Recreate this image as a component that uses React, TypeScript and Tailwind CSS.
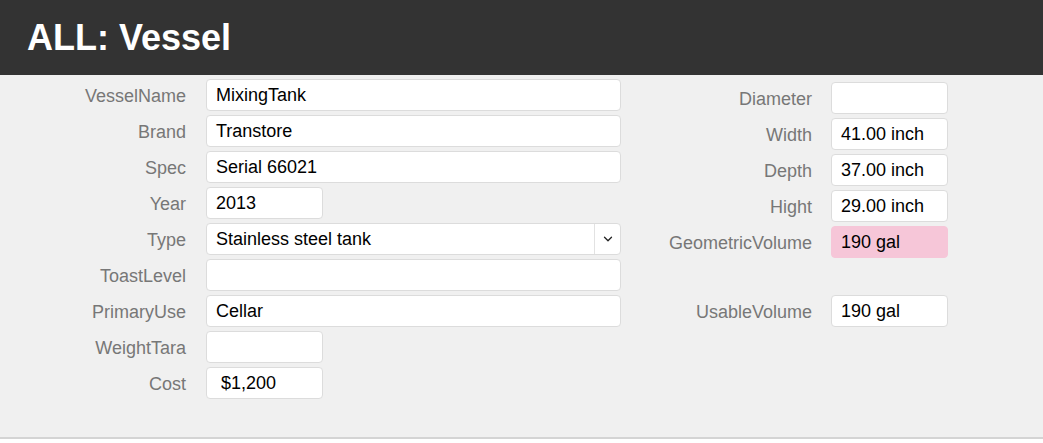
import { ChevronDown } from 'lucide-react';

type Field = { label: string; value?: string; size: 'wide' | 'small'; kind?: 'select' | 'money' };

const LEFT_FIELDS: Field[] = [
  { label: 'VesselName', value: 'MixingTank', size: 'wide' },
  { label: 'Brand', value: 'Transtore', size: 'wide' },
  { label: 'Spec', value: 'Serial 66021', size: 'wide' },
  { label: 'Year', value: '2013', size: 'small' },
  { label: 'Type', value: 'Stainless steel tank', size: 'wide', kind: 'select' },
  { label: 'ToastLevel', value: '', size: 'wide' },
  { label: 'PrimaryUse', value: 'Cellar', size: 'wide' },
  { label: 'WeightTara', value: '', size: 'small' },
  { label: 'Cost', value: '$1,200', size: 'small', kind: 'money' },
];

const DIMENSIONS = [
  { label: 'Diameter', value: '' },
  { label: 'Width', value: '41.00 inch' },
  { label: 'Depth', value: '37.00 inch' },
  { label: 'Hight', value: '29.00 inch' },
];

function Box({ value, size, kind, pink }: { value?: string; size: 'wide' | 'small'; kind?: string; pink?: boolean }) {
  return (
    <div
      className={`h-[32px] flex items-center rounded-[4px] border text-black ${
        size === 'wide' ? 'w-[415px]' : 'w-[117px]'
      } ${pink ? 'bg-[#f6c6d8] border-[#f6c6d8]' : 'bg-white border-[#dcdcdc]'}`}
    >
      <span className={`flex-1 truncate pt-[1px] ${kind === 'money' ? 'pl-[14px]' : 'pl-[9px]'}`}>{value}</span>
      {kind === 'select' && (
        <span className="h-full w-[26px] flex items-center justify-center border-l border-[#e2e2e2]">
          <ChevronDown className="w-[14px] h-[14px] text-[#222]" strokeWidth={2.25} />
        </span>
      )}
    </div>
  );
}

export default function App() {
  return (
    <div
      className="w-[1043px] h-[443px] flex flex-col bg-white text-[18px]"
      style={{ fontFamily: '"Liberation Sans", Arial, sans-serif' }}
    >
      {/* Title bar */}
      <div className="h-[75px] shrink-0 bg-[#333333] flex items-center px-[27px]">
        <h1 className="text-white font-bold text-[36px] leading-none">ALL: Vessel</h1>
      </div>

      {/* Form */}
      <div className="flex-1 bg-[#f0f0f0] border-b-2 border-[#d4d4d4] flex mb-[4px]">
        <div className="pt-[4px] flex flex-col gap-[4px]">
          {LEFT_FIELDS.map((f) => (
            <div key={f.label} className="flex items-center">
              <label className="w-[187px] pr-[1px] pt-[2px] text-right text-[#777777]">{f.label}</label>
              <div className="ml-[19px]">
                <Box value={f.value} size={f.size} kind={f.kind} />
              </div>
            </div>
          ))}
        </div>

        <div className="pt-[7px] flex flex-col gap-[4px]">
          {DIMENSIONS.map((d) => (
            <div key={d.label} className="flex items-center">
              <label className="w-[191px] text-right text-[#777777] pt-[2px]">{d.label}</label>
              <div className="ml-[19px]">
                <Box value={d.value} size="small" />
              </div>
            </div>
          ))}
          <div className="flex items-center">
            <label className="w-[191px] text-right text-[#777777] pt-[2px]">GeometricVolume</label>
            <div className="ml-[19px]">
              <Box value="190 gal" size="small" pink />
            </div>
          </div>
          <div className="h-[29px]" />
          <div className="flex items-center">
            <label className="w-[191px] text-right text-[#777777] pt-[2px]">UsableVolume</label>
            <div className="ml-[19px]">
              <Box value="190 gal" size="small" />
            </div>
          </div>
        </div>
      </div>
    </div>
  );
}
